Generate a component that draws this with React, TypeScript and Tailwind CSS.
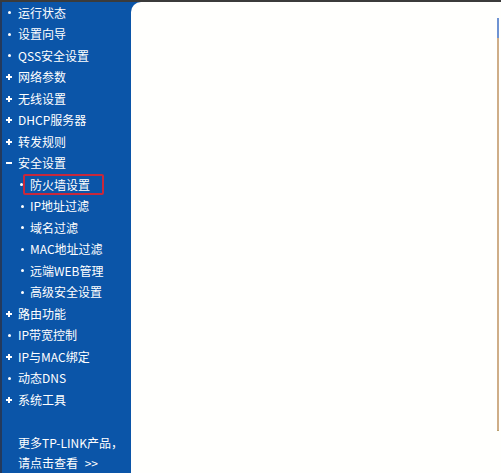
import React from "react";

type Item = { label: string; mark: "dot" | "plus" | "minus"; sub?: boolean; active?: boolean };

const menu: Item[] = [
  { label: "运行状态", mark: "dot" },
  { label: "设置向导", mark: "dot" },
  { label: "QSS安全设置", mark: "dot" },
  { label: "网络参数", mark: "plus" },
  { label: "无线设置", mark: "plus" },
  { label: "DHCP服务器", mark: "plus" },
  { label: "转发规则", mark: "plus" },
  { label: "安全设置", mark: "minus" },
  { label: "防火墙设置", mark: "dot", sub: true, active: true },
  { label: "IP地址过滤", mark: "dot", sub: true },
  { label: "域名过滤", mark: "dot", sub: true },
  { label: "MAC地址过滤", mark: "dot", sub: true },
  { label: "远端WEB管理", mark: "dot", sub: true },
  { label: "高级安全设置", mark: "dot", sub: true },
  { label: "路由功能", mark: "plus" },
  { label: "IP带宽控制", mark: "dot" },
  { label: "IP与MAC绑定", mark: "plus" },
  { label: "动态DNS", mark: "dot" },
  { label: "系统工具", mark: "plus" },
];

function Mark({ kind }: { kind: Item["mark"] }) {
  if (kind === "dot") return <span className="block w-[3px] h-[3px] bg-white rounded-full" />;
  if (kind === "minus") return <span className="block w-[6px] h-[2px] bg-white" />;
  return (
    <span className="relative block w-[6px] h-[6px]">
      <span className="absolute left-0 top-[2px] w-[6px] h-[2px] bg-white" />
      <span className="absolute left-[2px] top-0 w-[2px] h-[6px] bg-white" />
    </span>
  );
}

export default function App() {
  return (
    <div
      className="w-[501px] h-[473px] flex flex-col overflow-hidden bg-[#0b55a8] text-white text-[12px]"
      style={{ fontFamily: '"Noto Sans CJK SC", "DejaVu Sans", sans-serif' }}
    >
      <div className="h-[2px] bg-[#3b3b3b] shrink-0" />
      <div className="flex flex-1 min-h-0">
        <aside className="w-[131px] shrink-0 border-l-2 border-[#243a5c] flex flex-col">
          <ul>
            {menu.map((m) =>
              m.active ? (
                <li key={m.label} className="h-[21.5px] flex items-center pl-[14px]">
                  <span className="w-[10px] flex justify-center">
                    <Mark kind={m.mark} />
                  </span>
                  <span className="-ml-[3px] h-[21px] w-[81px] border-2 border-[#c8283c] rounded-[2px] flex items-center pl-[5px] leading-none">
                    {m.label}
                  </span>
                </li>
              ) : (
                <li
                  key={m.label}
                  className={`h-[21.5px] flex items-center ${m.sub ? "pl-[15px]" : "pl-[2px]"}`}
                >
                  <span className="w-[10px] flex justify-center">
                    <Mark kind={m.mark} />
                  </span>
                  <span className={`leading-none ${m.sub ? "ml-[3px]" : "ml-[4px]"}`}>{m.label}</span>
                </li>
              )
            )}
          </ul>
          <div className="mt-[22px] pl-[16px] leading-[20px]">
            <div>更多TP-LINK产品，</div>
            <div>
              请点击查看 <span className="ml-[4px]">&gt;&gt;</span>
            </div>
          </div>
        </aside>
        <main className="flex-1 bg-[#fffffd] rounded-tl-[10px] flex justify-end">
          <div className="w-[2px] mr-[2px] flex flex-col pt-[16px]">
            <div className="h-[20px] bg-[#6f93d2]" />
            <div className="h-[392px] bg-[#cfae88]" />
            <div className="h-[1px] bg-[#b8a070]" />
          </div>
        </main>
      </div>
    </div>
  );
}
